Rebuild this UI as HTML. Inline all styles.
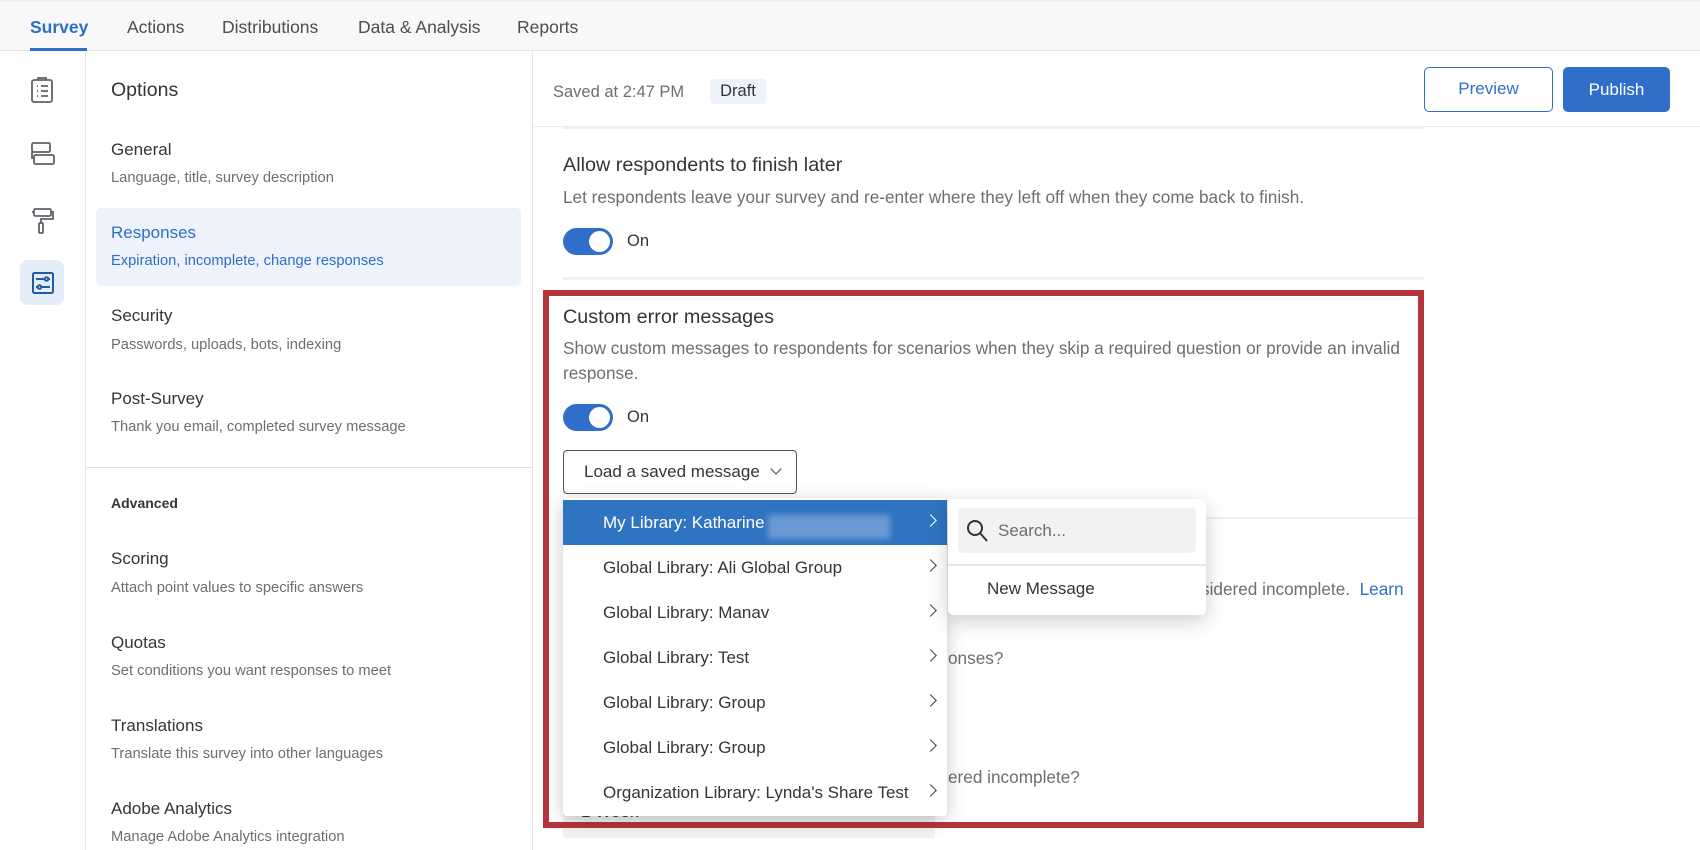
<!DOCTYPE html>
<html><head><meta charset="utf-8"><style>
*{box-sizing:border-box;margin:0;padding:0}
body{width:1700px;height:850px;overflow:hidden;background:#fff;font-family:"Liberation Sans",Arial,sans-serif;color:#32363a;position:relative}
.a{position:absolute;white-space:nowrap}
.t{font-size:17px;color:#32363a}
.s{font-size:14.7px;color:#6b6f73}
.h{font-size:19.8px;color:#32363a}
.d{font-size:17.2px;color:#6b6f73}
.tog{position:absolute;width:50px;height:27px;border-radius:14px;background:#2f6fc9}
.tog:after{content:"";position:absolute;right:3px;top:3px;width:21px;height:21px;border-radius:50%;background:#fff}
.mi{position:absolute;left:0;width:384px;height:45px;font-size:17px;color:#32363a;padding-left:40px;line-height:45px}
.ch{position:absolute;right:12px;top:16px;width:9px;height:9px;border-right:1.6px solid #444;border-top:1.6px solid #444;transform:rotate(45deg)}
</style></head><body>
<div class="a" style="left:0;top:0;width:1700px;height:51px;background:#f8f8f8;border-bottom:1px solid #e3e3e3;border-top:2px solid #eee"></div>
<div class="a" style="left:30px;top:17px;font-size:17.5px;color:#2f6fc9;font-weight:bold">Survey</div>
<div class="a" style="left:30px;top:48px;width:57px;height:3px;background:#2f6fc9"></div>
<div class="a" style="left:127px;top:17px;font-size:17.5px;color:#4a4e52">Actions</div>
<div class="a" style="left:222px;top:17px;font-size:17.5px;color:#4a4e52">Distributions</div>
<div class="a" style="left:358px;top:17px;font-size:17.5px;color:#4a4e52">Data &amp; Analysis</div>
<div class="a" style="left:517px;top:17px;font-size:17.5px;color:#4a4e52">Reports</div>
<div class="a" style="left:85px;top:51px;width:1px;height:799px;background:#e6e6e6"></div>
<svg class="a" style="left:30px;top:76px" width="24" height="28" viewBox="0 0 24 28" fill="none" stroke="#5f6368" stroke-width="1.8"><rect x="2" y="4" width="20" height="22" rx="2"/><path d="M8 4V2h8v2M7 10h1M11 10h7M7 15h1M11 15h7M7 20h1M11 20h7"/></svg>
<svg class="a" style="left:30px;top:141px" width="26" height="26" viewBox="0 0 26 26" fill="none" stroke="#5f6368" stroke-width="1.8"><rect x="2" y="2" width="18" height="9" rx="1.5"/><rect x="4" y="14" width="20" height="9" rx="1.5"/><path d="M2 11v6h2"/></svg>
<svg class="a" style="left:31px;top:207px" width="24" height="28" viewBox="0 0 24 28" fill="none" stroke="#5f6368" stroke-width="1.8"><rect x="3" y="2" width="17" height="7" rx="1.5"/><path d="M3 5H1M20 5h2v7H10v4"/><rect x="8" y="16" width="4" height="10" rx="1"/></svg>
<div class="a" style="left:20px;top:260px;width:44px;height:45px;background:#e5edf8;border-radius:8px"></div>
<svg class="a" style="left:31px;top:271px" width="24" height="24" viewBox="0 0 24 24" fill="none" stroke="#2459a8" stroke-width="2"><rect x="2" y="2" width="20" height="20" rx="1.5"/><path d="M5 8h9M17 8h2M5 16h2M10 16h9"/><circle cx="15.5" cy="8" r="1.8"/><circle cx="8.5" cy="16" r="1.8"/></svg>
<div class="a" style="left:532px;top:51px;width:1px;height:799px;background:#e6e6e6"></div>
<div class="a" style="left:111px;top:79px;font-size:19.5px;color:#32363a">Options</div>
<div class="a t" style="left:111px;top:140px">General</div>
<div class="a s" style="left:111px;top:170px">Language, title, survey description</div>
<div class="a" style="left:96px;top:208px;width:425px;height:78px;background:#edf2fb;border-radius:5px"></div>
<div class="a t" style="left:111px;top:223px;color:#2f6fc9">Responses</div>
<div class="a s" style="left:111px;top:253px;color:#2f6fc9">Expiration, incomplete, change responses</div>
<div class="a t" style="left:111px;top:306px">Security</div>
<div class="a s" style="left:111px;top:337px">Passwords, uploads, bots, indexing</div>
<div class="a t" style="left:111px;top:389px">Post-Survey</div>
<div class="a s" style="left:111px;top:419px">Thank you email, completed survey message</div>
<div class="a" style="left:86px;top:467px;width:446px;height:1px;background:#e3e3e3"></div>
<div class="a" style="left:111px;top:495px;font-size:14px;font-weight:bold;color:#32363a">Advanced</div>
<div class="a t" style="left:111px;top:549px">Scoring</div>
<div class="a s" style="left:111px;top:580px">Attach point values to specific answers</div>
<div class="a t" style="left:111px;top:633px">Quotas</div>
<div class="a s" style="left:111px;top:663px">Set conditions you want responses to meet</div>
<div class="a t" style="left:111px;top:716px">Translations</div>
<div class="a s" style="left:111px;top:746px">Translate this survey into other languages</div>
<div class="a t" style="left:111px;top:799px">Adobe Analytics</div>
<div class="a s" style="left:111px;top:829px">Manage Adobe Analytics integration</div>
<div class="a" style="left:553px;top:83px;font-size:16.5px;color:#6b6f73">Saved at 2:47 PM</div>
<div class="a" style="left:710px;top:79px;width:56px;height:25px;background:#edf2fb;border-radius:4px;font-size:16.5px;color:#32363a;text-align:center;line-height:25px">Draft</div>
<div class="a" style="left:1424px;top:67px;width:129px;height:45px;border:1.5px solid #2f6fc9;border-radius:5px;color:#2f6fc9;font-size:17px;text-align:center;line-height:42px">Preview</div>
<div class="a" style="left:1563px;top:67px;width:107px;height:45px;background:#2f6fc9;border-radius:5px;color:#fff;font-size:17px;text-align:center;line-height:45px">Publish</div>
<div class="a" style="left:533px;top:126px;width:1167px;height:1px;background:#ececec"></div>
<div class="a" style="left:563px;top:126px;width:861px;height:3px;background:#f0f0f0"></div>
<div class="a h" style="left:563px;top:154px">Allow respondents to finish later</div>
<div class="a d" style="left:563px;top:187px">Let respondents leave your survey and re-enter where they left off when they come back to finish.</div>
<div class="tog" style="left:563px;top:228px"></div>
<div class="a" style="left:627px;top:232px;font-size:16.5px">On</div>
<div class="a" style="left:563px;top:277px;width:861px;height:3px;background:#f0f0f0"></div>
<div class="a h" style="left:563px;top:306px">Custom error messages</div>
<div class="a d" style="left:563px;top:338px">Show custom messages to respondents for scenarios when they skip a required question or provide an invalid</div>
<div class="a d" style="left:563px;top:363px">response.</div>
<div class="tog" style="left:563px;top:404px"></div>
<div class="a" style="left:627px;top:408px;font-size:16.5px">On</div>
<div class="a" style="left:563px;top:450px;width:234px;height:44px;border:1px solid #555;border-radius:4px;font-size:17px;color:#32363a;padding-left:20px;line-height:42px">Load a saved message</div>
<div class="a" style="left:772px;top:465px;width:8px;height:8px;border-right:1.5px solid #444;border-bottom:1.5px solid #444;transform:rotate(45deg)"></div>
<div class="a" style="left:948px;top:517px;width:476px;height:2px;background:#f0f0f0"></div>
<div class="a d" style="left:1201px;top:579px">sidered incomplete.&nbsp; <span style="color:#2f6fc9">Learn</span></div>
<div class="a d" style="left:948px;top:648px">onses?</div>
<div class="a d" style="left:948px;top:767px">ered incomplete?</div>
<div class="a" style="left:563px;top:802px;width:372px;height:36px;background:#f2f2f2;border-radius:3px;font-size:17px;padding-left:18px;line-height:20px;color:#32363a">1 Week</div>
<div class="a" style="left:543px;top:290px;width:881px;height:538px;border:6px solid #b5363a"></div>
<div class="a" style="left:563px;top:498px;width:384px;height:318px;background:#fff;border-radius:4px;box-shadow:0 4px 18px rgba(0,0,0,.22)">
<div class="mi" style="top:2px;background:#2f74c0;color:#fff">My Library: Katharine<span style="position:absolute;left:205px;top:15px;width:122px;height:24px;background:#6b9ad4;filter:blur(3px)"></span><span class="ch" style="border-color:#fff"></span></div>
<div class="mi" style="top:47px">Global Library: Ali Global Group<span class="ch"></span></div>
<div class="mi" style="top:92px">Global Library: Manav<span class="ch"></span></div>
<div class="mi" style="top:137px">Global Library: Test<span class="ch"></span></div>
<div class="mi" style="top:182px">Global Library: Group<span class="ch"></span></div>
<div class="mi" style="top:227px">Global Library: Group<span class="ch"></span></div>
<div class="mi" style="top:272px">Organization Library: Lynda's Share Test<span class="ch"></span></div>
</div>
<div class="a" style="left:948px;top:499px;width:258px;height:116px;background:#fff;border-radius:5px;box-shadow:0 6px 20px rgba(0,0,0,.2)">
<div class="a" style="left:10px;top:9px;width:238px;height:45px;background:#f2f2f2;border-radius:5px"></div>
<svg class="a" style="left:18px;top:20px" width="24" height="26" viewBox="0 0 24 26" fill="none" stroke="#333" stroke-width="2"><circle cx="9" cy="9" r="7"/><path d="M14 14l7 8"/></svg>
<div class="a" style="left:50px;top:22px;font-size:17px;color:#6b6f73">Search...</div>
<div class="a" style="left:0;top:65px;width:258px;height:2px;background:#e6e6e6"></div>
<div class="a" style="left:39px;top:80px;font-size:17px;color:#32363a">New Message</div>
</div>
</body></html>
